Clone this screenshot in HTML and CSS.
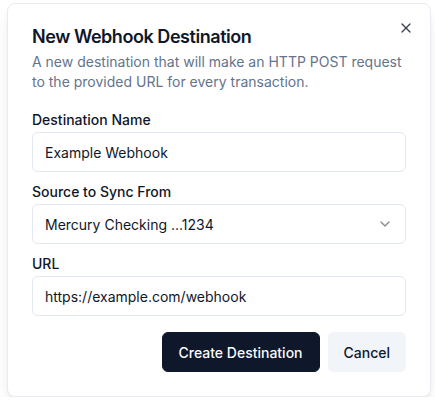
FILE: index.html
```html
<!DOCTYPE html>
<html>
<head>
<meta charset="utf-8">
<link rel="stylesheet" href="styles.css">
</head>
<body>
<div class="dialog">
  <button class="close" aria-label="Close">
    <svg width="16" height="16" viewBox="0 0 24 24" fill="none" stroke="currentColor" stroke-width="2" stroke-linecap="round" stroke-linejoin="round"><path d="M18 6 6 18"/><path d="m6 6 12 12"/></svg>
  </button>
  <div class="header">
    <h2 class="title">New Webhook Destination</h2>
    <p class="desc">A new destination that will make an HTTP POST request to the provided URL for every transaction.</p>
  </div>
  <div class="form">
    <div class="field">
      <label class="label">Destination Name</label>
      <div class="input">Example Webhook</div>
    </div>
    <div class="field">
      <label class="label">Source to Sync From</label>
      <div class="input select">
        <span>Mercury Checking ...1234</span>
        <svg class="chev" width="16" height="16" viewBox="0 0 24 24" fill="none" stroke="currentColor" stroke-width="2" stroke-linecap="round" stroke-linejoin="round"><path d="m6 9 6 6 6-6"/></svg>
      </div>
    </div>
    <div class="field">
      <label class="label">URL</label>
      <div class="input">https://example.com/webhook</div>
    </div>
  </div>
  <div class="footer">
    <button class="btn primary">Create Destination</button>
    <button class="btn secondary">Cancel</button>
  </div>
</div>
</body>
</html>
```
FILE: styles.css
```css
* { box-sizing: border-box; }
html, body { margin: 0; background: #ffffff; }
body {
  padding: 3px 0 0 7px;
  font-family: Inter, "Noto Sans", sans-serif;
  color: #0f172a;
}
.dialog {
  position: relative;
  width: 424px;
  padding: 24px;
  background: #fff;
  border: 1px solid #e8ecf2;
  border-radius: 8px;
  box-shadow: 0 10px 15px -3px rgba(0,0,0,0.1), 0 4px 6px -4px rgba(0,0,0,0.1);
}
.close {
  position: absolute;
  top: 16px;
  right: 16px;
  width: 16px;
  height: 16px;
  padding: 0;
  border: 0;
  background: none;
  color: #0f172a;
  opacity: 0.8;
  display: flex;
}
.header { display: flex; flex-direction: column; gap: 6px; }
.title {
  margin: 0;
  font-size: 18px;
  font-weight: 600;
  line-height: 1;
  letter-spacing: -0.45px;
}
.desc {
  margin: 0;
  font-size: 14px;
  line-height: 20px;
  color: #64748b;
}
.form {
  margin-top: 18px;
  display: flex;
  flex-direction: column;
  gap: 10px;
}
.field { display: flex; flex-direction: column; gap: 2px; }
.label {
  font-size: 14px;
  font-weight: 500;
  line-height: 20px;
}
.input {
  height: 40px;
  border: 1px solid #e2e8f0;
  border-radius: 6px;
  padding: 0 12px;
  font-size: 14px;
  display: flex;
  align-items: center;
}
.select { justify-content: space-between; }
.chev { opacity: 0.5; }
.footer {
  margin-top: 16px;
  display: flex;
  justify-content: flex-end;
  gap: 8px;
}
.btn {
  height: 40px;
  padding: 0 16px;
  border-radius: 6px;
  font-family: inherit;
  font-size: 14px;
  font-weight: 500;
  border: 0;
}
.primary { background: #0f172a; color: #f8fafc; border: 1px solid #0f172a; }
.secondary { background: #f1f5f9; color: #0f172a; }
```
